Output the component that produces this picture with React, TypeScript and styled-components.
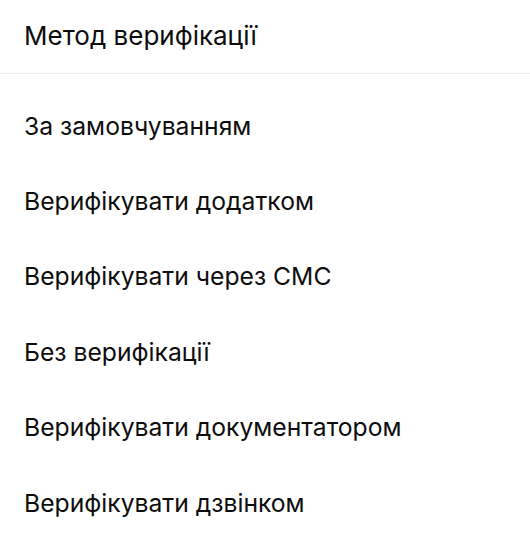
import styled, { createGlobalStyle } from 'styled-components';

const GlobalStyle = createGlobalStyle`
  html, body {
    margin: 0;
    padding: 0;
    background: #ffffff;
  }
  body {
    font-family: Inter, Roboto, "Noto Sans", sans-serif;
    color: #0d0d0d;
  }
`;

const options = [
    'За замовчуванням',
    'Верифікувати додатком',
    'Верифікувати через СМС',
    'Без верифікації',
    'Верифікувати документатором',
    'Верифікувати дзвінком',
];

function App() {
    return (
        <>
            <GlobalStyle />
            <Sheet>
                <Header>
                    <Title>Метод верифікації</Title>
                </Header>
                <List>
                    {options.map(option => (
                        <Item key={option}>{option}</Item>
                    ))}
                </List>
            </Sheet>
        </>
    );
}

const Sheet = styled.div`
  width: 530px;
  height: 555px;
  background: #ffffff;
  overflow: hidden;
`;

const Header = styled.div`
  height: 74px;
  display: flex;
  align-items: center;
  padding: 0 24px;
  box-sizing: border-box;
  border-bottom: 1px solid #ececec;
`;

const Title = styled.div`
  font-size: 26px;
  font-weight: 400;
  margin-top: -2px;
`;

const List = styled.div`
  display: flex;
  flex-direction: column;
  padding-top: 14px;
`;

const Item = styled.div`
  height: 75.4px;
  display: flex;
  align-items: center;
  padding: 0 24px;
  font-size: 24.7px;
  font-weight: 400;
`;

export default App;
